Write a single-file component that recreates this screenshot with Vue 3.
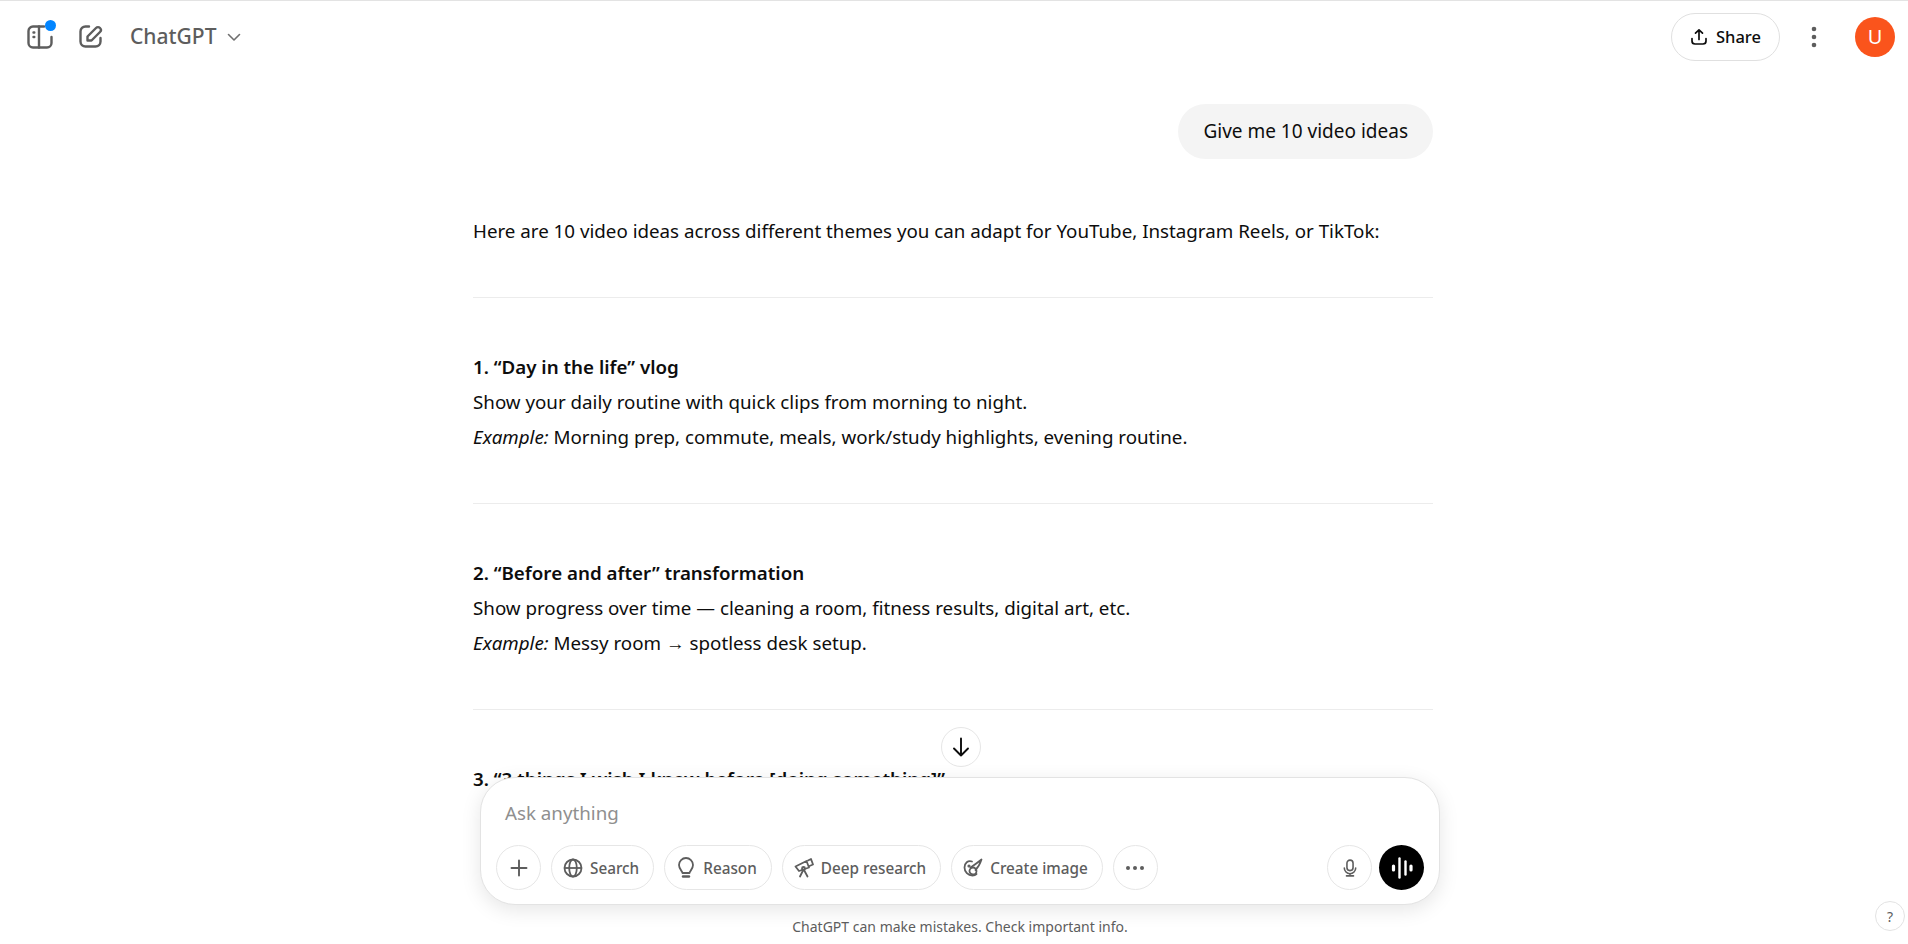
<script setup>
const sections = [
  { title: '1. “Day in the life” vlog', desc: 'Show your daily routine with quick clips from morning to night.', ex: 'Morning prep, commute, meals, work/study highlights, evening routine.' },
  { title: '2. “Before and after” transformation', desc: 'Show progress over time — cleaning a room, fitness results, digital art, etc.', ex: 'Messy room → spotless desk setup.' },
]
</script>

<template>
  <div class="page">
    <header class="topbar">
      <div class="left">
        <span class="side-wrap">
          <svg class="side-icon" width="26" height="24" viewBox="0 0 26 24" fill="none" stroke="#5d5d5d" stroke-width="2.4" stroke-linecap="round" stroke-linejoin="round">
            <path d="M17 1.500H6a4.500 4.500 0 0 0-4.500 4.500v12A4.500 4.500 0 0 0 6 22.500h14a4.500 4.500 0 0 0 4.500-4.500v-6" />
            <path d="M12 1.500v21" />
            <path d="M6.500 7.500h.8M6.500 12h.8" />
          </svg>
          <span class="dot"></span>
        </span>
        <svg class="edit" width="25" height="25" viewBox="0 0 25 25" fill="none" stroke="#5d5d5d" stroke-width="2.4" stroke-linecap="round" stroke-linejoin="round">
          <path d="M11 2.500H7.500a5 5 0 0 0-5 5v10a5 5 0 0 0 5 5h10a5 5 0 0 0 5-5V14" />
          <path d="M9.500 12.500 18 4a2.800 2.800 0 0 1 4 4l-8.500 8.500H9.500z" />
        </svg>
        <span class="model">ChatGPT</span>
        <svg class="chev" width="16" height="16" viewBox="0 0 16 16" fill="none" stroke="#6f6f6f" stroke-width="1.600" stroke-linecap="round" stroke-linejoin="round"><path d="M2.500 5.500 8 11l5.500-5.500" /></svg>
      </div>
      <div class="right">
        <button class="share">
          <svg width="18" height="18" viewBox="0 0 18 18" fill="none" stroke="#0d0d0d" stroke-width="1.700" stroke-linecap="round" stroke-linejoin="round"><path d="M9 11.500V2M5.500 5.200 9 1.800l3.500 3.400M2 10.500V13a3 3 0 0 0 3 3h8a3 3 0 0 0 3-3v-2.500" /></svg>
          Share
        </button>
        <svg class="kebab" width="6" height="22" viewBox="0 0 6 22" fill="#5d5d5d"><circle cx="3" cy="3" r="2.300" /><circle cx="3" cy="11" r="2.300" /><circle cx="3" cy="19" r="2.300" /></svg>
        <span class="avatar">U</span>
      </div>
    </header>

    <main class="thread">
      <div class="column">
        <div class="user-row"><div class="bubble">Give me 10 video ideas</div></div>
        <p class="intro">Here are 10 video ideas across different themes you can adapt for YouTube, Instagram Reels, or TikTok:</p>
        <template v-for="s in sections" :key="s.title">
          <hr />
          <p><strong>{{ s.title }}</strong><br />{{ s.desc }}<br /><em>Example:</em> {{ s.ex }}</p>
        </template>
        <hr />
        <p><strong>3. “3 things I wish I knew before [doing something]”</strong></p>
      </div>
    </main>

    <button class="scroll-down">
      <svg width="22" height="22" viewBox="0 0 22 22" fill="none" stroke="#0d0d0d" stroke-width="1.900" stroke-linecap="round" stroke-linejoin="round"><path d="M11 2.500v17M4 12.500l7 7 7-7" /></svg>
    </button>

    <div class="dock">
      <div class="composer">
        <div class="placeholder">Ask anything</div>
        <div class="tools">
          <button class="chip round">
            <svg width="20" height="20" viewBox="0 0 20 20" fill="none" stroke="#5d5d5d" stroke-width="1.900" stroke-linecap="round"><path d="M10 2.500v15M2.500 10h15" /></svg>
          </button>
          <button class="chip">
            <svg width="20" height="20" viewBox="0 0 20 20" fill="none" stroke="#5d5d5d" stroke-width="1.800"><circle cx="10" cy="10" r="8.500" /><ellipse cx="10" cy="10" rx="3.800" ry="8.500" /><path d="M1.500 10h17" /></svg>
            Search
          </button>
          <button class="chip">
            <svg width="20" height="22" viewBox="0 0 20 22" fill="none" stroke="#5d5d5d" stroke-width="1.800" stroke-linecap="round" stroke-linejoin="round"><path d="M6.500 16c0-2-3.500-3.500-3.500-8a7 7 0 0 1 14 0c0 4.500-3.500 6-3.500 8z" /><path d="M7 19.500h6" stroke-width="2.400" /></svg>
            Reason
          </button>
          <button class="chip">
            <svg width="20" height="20" viewBox="0 0 20 20" fill="none" stroke="#5d5d5d" stroke-width="1.800" stroke-linecap="round" stroke-linejoin="round"><path d="M1.500 8.500 12.500 3l2.500 6.500-10 3.500z" /><path d="M14 2.500l3-1.500 2 5.500-3.500 1.500" /><path d="M9 12.500 6 18.500M10 12l3.500 6.500" /><circle cx="9.500" cy="10.500" r="1.500" /></svg>
            Deep research
          </button>
          <button class="chip">
            <svg width="20" height="20" viewBox="0 0 20 20" fill="none" stroke="#5d5d5d" stroke-width="1.800" stroke-linecap="round" stroke-linejoin="round"><path d="M9 3.500C5 2 1.500 5 1.500 9.500c0 4.500 3.500 8 8 8 1.500 0 3-.5 4-1.500" /><path d="M7.500 9.500C10 8 14 5 18.500 1.500 17 6 14.500 10 12.500 12" /><circle cx="10" cy="13" r="3.500" /><circle cx="6" cy="8" r=".7" /></svg>
            Create image
          </button>
          <button class="chip round">
            <svg width="20" height="6" viewBox="0 0 20 6" fill="#5d5d5d"><circle cx="3" cy="3" r="2" /><circle cx="10" cy="3" r="2" /><circle cx="17" cy="3" r="2" /></svg>
          </button>
          <span class="spacer"></span>
          <button class="chip round">
            <svg width="14" height="18" viewBox="0 0 16 20" fill="none" stroke="#5d5d5d" stroke-width="1.800" stroke-linecap="round"><rect x="4.500" y="1" width="7" height="12" rx="3.500" /><path d="M1.500 10a6.500 6.500 0 0 0 13 0M8 16.500V19M4 19h8" /></svg>
          </button>
          <button class="voice">
            <svg width="24" height="24" viewBox="0 0 24 24" fill="none" stroke="#fff" stroke-linecap="round"><path d="M3.500 10v4M21 10v4" stroke-width="3.200" /><path d="M9.500 2.500v19" stroke-width="2.400" /><path d="M15.500 5.500v13" stroke-width="2.400" /></svg>
          </button>
        </div>
      </div>
      <div class="note">ChatGPT can make mistakes. Check important info.</div>
    </div>

    <button class="help">?</button>
  </div>
</template>

<style>
html, body { margin: 0; background: #fff; }
</style>

<style scoped>
.page {
  position: relative;
  height: 944px;
  overflow: hidden;
  background: #fff;
  color: #0d0d0d;
  font-family: "Noto Sans", "Open Sans", sans-serif;
  font-size: 18.75px;
  line-height: 35px;
}
button { font-family: inherit; background: #fff; margin: 0; cursor: pointer; }
.topbar {
  height: 71px;
  border-top: 1px solid #e3e3e3;
  display: flex;
  align-items: center;
  justify-content: space-between;
  padding: 0 13px 0 27px;
}
.left, .right { display: flex; align-items: center; }
.side-wrap { position: relative; display: flex; }
.dot {
  position: absolute;
  top: -5px;
  right: -3px;
  width: 11px;
  height: 11px;
  border-radius: 50%;
  background: #0285ff;
}
.edit { margin-left: 25px; }
.model {
  margin-left: 27px;
  color: #5d5d5d;
  font-size: 21px;
  font-weight: 500;
}
.chev { margin-left: 10px; }
.share {
  display: flex;
  align-items: center;
  gap: 8px;
  width: 109px;
  height: 48px;
  justify-content: center;
  border: 1px solid #e0e0e0;
  border-radius: 24px;
  color: #0d0d0d;
  font-size: 16.500px;
  font-weight: 500;
}
.kebab { margin-left: 31px; }
.avatar {
  margin-left: 38px;
  width: 40px;
  height: 40px;
  border-radius: 50%;
  background: #fa541c;
  color: #fff;
  font-size: 20px;
  display: flex;
  align-items: center;
  justify-content: center;
}
.thread { padding-right: 2px; }
.column { width: 960px; margin: 0 auto; }
.user-row { display: flex; justify-content: flex-end; padding-top: 32px; }
.bubble {
  background: #f4f4f4;
  border-radius: 28px;
  padding: 10px 25px;
  font-size: 19px;
}
p { margin: 0; }
.intro { margin-top: 54px; }
hr { border: 0; border-top: 1px solid #ececec; margin: 49px 0 51px; }
strong { font-weight: 600; }
.scroll-down {
  position: absolute;
  left: 941px;
  top: 727px;
  width: 40px;
  height: 40px;
  border-radius: 50%;
  border: 1px solid #e6e6e6;
  padding: 0;
  display: flex;
  align-items: center;
  justify-content: center;
}
.dock {
  position: absolute;
  left: 12px;
  right: 0;
  top: 777px;
  display: flex;
  flex-direction: column;
  align-items: center;
}
.composer {
  width: 960px;
  height: 128px;
  box-sizing: border-box;
  background: #fff;
  border: 1px solid #e3e3e3;
  border-radius: 35px;
  box-shadow: 0 5px 20px rgba(0, 0, 0, 0.1);
  padding: 0 15px 14px;
  display: flex;
  flex-direction: column;
  justify-content: space-between;
}
.placeholder {
  color: #8f8f8f;
  padding: 17px 9px 0;
}
.tools { display: flex; align-items: center; gap: 10px; }
.spacer { flex: 1; margin-right: -2px; }
.chip {
  height: 45px;
  box-sizing: border-box;
  display: flex;
  align-items: center;
  gap: 7px;
  padding: 0 14px 0 11px;
  border: 1px solid #e6e6e6;
  border-radius: 23px;
  color: #5d5d5d;
  font-size: 15.300px;
  font-weight: 500;
}
.chip.round { width: 45px; padding: 0; justify-content: center; }
.voice {
  width: 45px;
  height: 45px;
  padding: 0;
  margin-left: -3px;
  border: 0;
  border-radius: 50%;
  background: #000;
  display: flex;
  align-items: center;
  justify-content: center;
}
.note {
  margin-top: 10px;
  color: #5d5d5d;
  font-size: 14px;
  line-height: 24px;
}
.help {
  position: absolute;
  right: 3px;
  bottom: 13px;
  width: 30px;
  height: 30px;
  padding: 0;
  border: 1px solid #e3e3e3;
  border-radius: 50%;
  color: #5d5d5d;
  font-size: 14px;
}
</style>
